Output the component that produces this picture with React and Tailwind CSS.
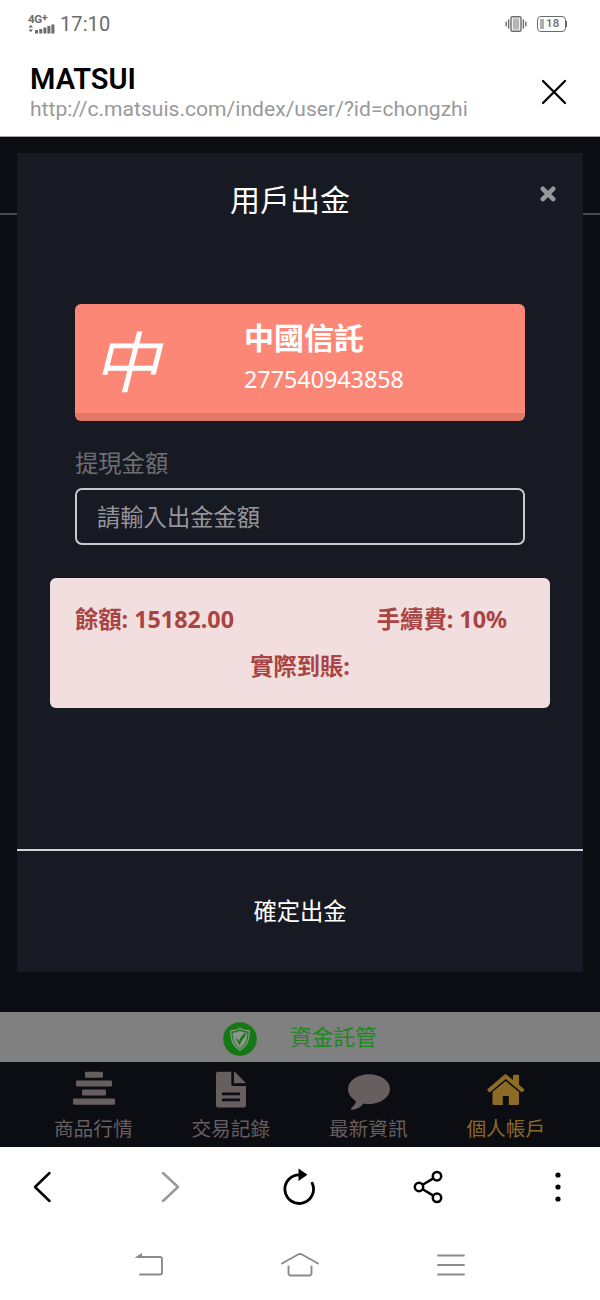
import React, { useState } from "react";

const StatusBar = () => (
  <div className="flex h-12 items-center justify-between pl-7 pr-[33px] text-[#6b6b6b]">
    <div className="flex items-center">
      <div className="flex w-[27px] flex-col">
        <div className="flex h-[9px] items-start text-[11.5px] leading-[9px] font-bold tracking-[-0.3px]">
          <span>4G</span>
          <span className="text-[11px] leading-[5px]">+</span>
        </div>
        <svg width="27" height="10" viewBox="0 0 27 10" fill="currentColor">
          <path d="M0.5 3.5L2.8 0.8L5 3.5ZM0.5 5.5L2.8 8.2L5 5.5Z" />
          <path d="M7 6h3v3.5h-3zM11.2 5h3v4.5h-3zM15.4 3.6h3v5.9h-3zM19.4 2h3v7.5h-3zM23.4 0.4h3v9.1h-3z" />
        </svg>
      </div>
      <span className="ml-[5px] text-[20px] leading-6 tracking-[0.1px]">17:10</span>
    </div>
    <div className="flex items-center gap-2.5">
      <svg width="22" height="18" viewBox="0 0 22 18" fill="none" stroke="currentColor" strokeWidth="1.4">
        <rect x="6" y="1.7" width="10" height="14.6" rx="1.5" />
        <rect x="7.8" y="3.4" width="6.4" height="11.2" fill="#b5b5b5" stroke="none" />
        <path d="M3.6 4.5v9M18.4 4.5v9M1.1 6.7v4.6M20.9 6.7v4.6" />
      </svg>
      <div className="flex items-center">
        <div className="flex h-4 w-[29px] items-center rounded-[4px] border-[1.5px] border-[#6b6b6b] pl-[2px]">
          <span className="h-2.5 w-1 bg-[#b0b0b0]"></span>
          <span className="ml-[2px] text-[11.5px] leading-none font-medium tracking-[0.3px]">18</span>
        </div>
        <span className="h-1.5 w-px bg-[#6b6b6b]"></span>
      </div>
    </div>
  </div>
);

const BrowserHeader = () => (
  <div className="flex h-[89px] items-center justify-between border-b border-[#a5a5a5] bg-white pl-[30px] pr-[32.5px]">
    <div className="flex flex-col pb-[1px]">
      <span className="text-[29px] leading-[34px] font-semibold text-black">MATSUI</span>
      <span className="text-[21.1px] leading-[25px] text-[#999]">http://c.matsuis.com/index/user/?id=chongzhi</span>
    </div>
    <svg width="28" height="28" viewBox="0 0 28 28" stroke="#000" strokeWidth="2.3" strokeLinecap="round" className="mb-[1px]">
      <path d="M3 3L25 25M25 3L3 25" />
    </svg>
  </div>
);

// Tab icons
const RankIcon = () => (
  <svg width="42" height="36" viewBox="0 0 42 36" fill="currentColor">
    <rect x="12" y="0.7" width="18" height="6" rx="1.3" />
    <rect x="3" y="9.6" width="36" height="6" rx="1.3" />
    <rect x="9" y="18.5" width="24" height="6" rx="1.3" />
    <rect x="0" y="27.4" width="42" height="6.3" rx="1.3" />
  </svg>
);

const FileIcon = () => (
  <svg width="30" height="37" viewBox="0 0 30 37" fill="currentColor">
    <path fillRule="evenodd" d="M2 0.8H15.3V13.3Q15.3 15 17 15H30V34.3Q30 36.5 28 36.5H2Q0 36.5 0 34.3V2.8Q0 0.8 2 0.8ZM6 21.5V24.2H24V21.5ZM6 27.5V30.2H24V27.5Z" />
    <path d="M18 0.8C19 1 19.5 1.5 20.3 2.3L28.4 10.4Q29.7 11.6 29.9 12.3H18Z" />
  </svg>
);

const ChatIcon = () => (
  <svg width="42" height="39" viewBox="0 0 42 39" fill="currentColor">
    <path d="M21 3.2C32.6 3.2 42 9.8 42 18S32.6 33 21 33C19.2 33 17.5 32.9 15.9 32.5C13 35.5 9.3 38.5 4 38.8C3 38.9 2.6 38 3.3 37.2C5.6 35 7.3 33 8 30C3 27.2 0 22.8 0 18C0 9.8 9.4 3.2 21 3.2Z" />
  </svg>
);

const HomeIcon = () => (
  <svg width="38" height="36" viewBox="0 0 38 36" fill="currentColor">
    <path d="M18.7 3.2Q19.3 3.2 20 3.9L26 9V4.5Q26 3.8 26.7 3.8H31.4Q32 3.8 32 4.5V13.8L37 18Q37.8 18.7 37.2 19.3L35.5 21Q35 21.5 34.3 21L18.7 8L3.3 21Q2.5 21.5 2 21L0.4 19.3Q0 18.7 0.6 18L17 4.1Q18 3.2 18.7 3.2Z" />
    <path d="M18.7 10L32 21V32.5Q32 34 30.5 34H21.8V25H15.8V34H7Q5.5 34 5.5 32.5V21Z" />
  </svg>
);

const tabs = [
  { label: "商品行情", icon: RankIcon },
  { label: "交易記錄", icon: FileIcon },
  { label: "最新資訊", icon: ChatIcon },
  { label: "個人帳戶", icon: HomeIcon, active: true },
];

const TrustBar = () => (
  <div className="flex h-[50px] items-center bg-[#808080] pl-[223px]">
    <svg width="34" height="34" viewBox="0 0 34 34" className="mt-1">
      <circle cx="17" cy="17" r="16.8" fill="#157815" />
      <path d="M17 6.2C13.8 8.3 11 8.8 7.8 8.8C7.3 17.5 10 24 17 28.2C24 24 26.7 17.5 26.2 8.8C23 8.8 20.2 8.3 17 6.2Z" fill="none" stroke="#8c9b8c" strokeWidth="1.2" />
      <path d="M17 8.6C14.5 10.2 12 10.7 9.7 10.8C9.5 17.5 11.5 22.8 17 26.2C22.5 22.8 24.5 17.5 24.3 10.8C22 10.7 19.5 10.2 17 8.6Z" fill="#8c948c" />
      <path d="M12.2 16.4Q14.5 17 16 19.2Q17.7 14 22.8 10.6Q22.8 13 22.3 13.8Q18.3 18.5 16.4 23.4Q15 19.5 12.2 16.4Z" fill="#157815" />
    </svg>
    <span className="ml-[33px] text-[21.7px] leading-[30px] text-[#1d861d]">資金託管</span>
  </div>
);

const TabBar = () => (
  <div className="flex h-[85px] justify-center px-[25px] pt-[9px]">
    {tabs.map(({ label, icon: Icon, active }) => (
      <div
        key={label}
        className={`flex w-[137.5px] flex-col items-center ${active ? "text-[#8d6b24]" : "text-[#675e60]"}`}
      >
        <div className="flex h-[39px] items-start">
          <Icon />
        </div>
        <span className="mt-[5px] mr-[1px] text-[19.7px] leading-7">{label}</span>
      </div>
    ))}
  </div>
);

const WithdrawModal = () => {
  const [amount, setAmount] = useState("");

  return (
    <div className="absolute inset-x-[17px] top-4 flex h-[819px] flex-col bg-[#171923]">
      <div className="flex h-[151px] items-start justify-between pl-[23px] pr-[27px]">
        <h1 className="flex-1 pt-[26px] text-center text-[30px] leading-[42px] text-white">用戶出金</h1>
        <svg width="16" height="18" viewBox="0 0 16 18" stroke="#96979b" strokeWidth="4.6" strokeLinecap="round" className="mt-8">
          <path d="M2.8 3.8L13.2 14.2M13.2 3.8L2.8 14.2" />
        </svg>
      </div>

      <div className="flex flex-1 flex-col px-[33px]">
        {/* Bank card */}
        <div className="mx-[25px] flex h-[117px] rounded-md border-b-8 border-[#e1786a] bg-[#fd8776] text-white">
          <div className="w-[169px] pt-[10px] pl-[18px] text-[66px] leading-[94px] italic">中</div>
          <div className="flex flex-col pt-[13px]">
            <span className="text-[30px] leading-[42px] font-bold">中國信託</span>
            <span className="text-[23.3px] leading-10">277540943858</span>
          </div>
        </div>

        <label className="mx-[25px] mt-[25px] text-[23.3px] leading-[34px] text-[#6f6f72]">提現金額</label>
        <input
          value={amount}
          onChange={(e) => setAmount(e.target.value)}
          placeholder="請輸入出金金額"
          className="mx-[25px] mt-2 h-[57px] rounded-[7px] border-2 border-[#c8c8cc] bg-transparent px-5 text-[23.3px] text-white outline-none placeholder:text-[#96969a]"
        />

        <div className="mt-[33px] flex h-[130px] flex-col rounded-md bg-[#f2dede] pt-[18px] text-[23.3px] leading-[46.5px] font-bold text-[#a94442]">
          <div className="flex justify-between pl-[25px] pr-[43px]">
            <span>餘額: 15182.00</span>
            <span>手續費: 10%</span>
          </div>
          <div className="text-center">實際到賬:</div>
        </div>
      </div>

      <button className="h-[123px] border-t-2 border-[#d5d5d8] text-[23.3px] text-white">確定出金</button>
    </div>
  );
};

const BrowserToolbar = () => (
  <div className="flex h-[80px] items-center px-8">
    <svg width="20" height="32" viewBox="0 0 20 32" fill="none" stroke="#000" strokeWidth="2.5" strokeLinecap="round" strokeLinejoin="round">
      <path d="M17.5 2L3 16L17.5 30" />
    </svg>
    <svg width="20" height="32" viewBox="0 0 20 32" fill="none" stroke="#999" strokeWidth="2.5" strokeLinecap="round" strokeLinejoin="round" className="ml-[109px]">
      <path d="M2 2L17 16L2 30" />
    </svg>
    <svg width="34" height="38" viewBox="0 0 34 38" className="ml-[101px]">
      <path d="M18 6.9A14.3 14.3 0 1 0 30.2 15.2" fill="none" stroke="#000" strokeWidth="2.8" strokeLinecap="round" />
      <path d="M16.5 0.5L25.5 6.8L16.5 13Z" />
    </svg>
    <svg width="30" height="34" viewBox="0 0 30 34" fill="none" stroke="#000" strokeWidth="2.5" className="ml-[97px]">
      <circle cx="6" cy="17" r="4.2" />
      <circle cx="24" cy="6.2" r="4.2" />
      <circle cx="24" cy="27.8" r="4.2" />
      <path d="M9.7 14.8L20.3 8.4M9.7 19.2L20.3 25.6" />
    </svg>
    <svg width="6" height="30" viewBox="0 0 6 30" className="ml-[112px]">
      <circle cx="3" cy="3" r="2.6" />
      <circle cx="3" cy="15" r="2.6" />
      <circle cx="3" cy="27" r="2.6" />
    </svg>
  </div>
);

const SystemNav = () => (
  <div className="flex h-[73px] items-center justify-center gap-[118px] pt-[2px] text-[#8a8a8a]">
    <svg width="30" height="28" viewBox="0 0 30 28" fill="none" stroke="currentColor" strokeWidth="1.9" strokeLinecap="round">
      <path d="M4 6H26Q28 6 28 8V21.5Q28 23.5 26 23.5H6" />
      <path d="M0.5 6.8L8 2V6.8Z" fill="currentColor" stroke="none" />
    </svg>
    <svg width="40" height="28" viewBox="0 0 40 28" fill="none" stroke="currentColor" strokeWidth="1.9" strokeLinecap="round" strokeLinejoin="round" className="-mx-[2px]">
      <path d="M2 12.5L18 3.5Q20 2.5 22 3.5L38 12.5M8.5 15.5V22Q8.5 24.5 11 24.5H29Q31.5 24.5 31.5 22V15.5" />
    </svg>
    <svg width="30" height="28" viewBox="0 0 30 28" stroke="currentColor" strokeWidth="1.9" strokeLinecap="round">
      <path d="M2 4.5H28M2 14H28M2 23.5H28" />
    </svg>
  </div>
);

const App = () => {
  return (
    <div className="flex h-[1300px] w-[600px] flex-col overflow-hidden bg-white font-['Roboto',sans-serif]">
      <StatusBar />
      <BrowserHeader />

      <main
        lang="zh-Hant"
        className="relative flex h-[1010px] flex-col bg-[#0c0d12] font-['Noto_Sans','Noto_Sans_CJK_TC',sans-serif]"
      >
        {/* Dimmed page behind the modal */}
        <div className="h-[78px] border-b-2 border-[#4b4b4f]"></div>
        <div className="flex-1"></div>
        <TrustBar />
        <TabBar />
        <WithdrawModal />
      </main>

      <BrowserToolbar />
      <SystemNav />
    </div>
  );
};

export default App;
